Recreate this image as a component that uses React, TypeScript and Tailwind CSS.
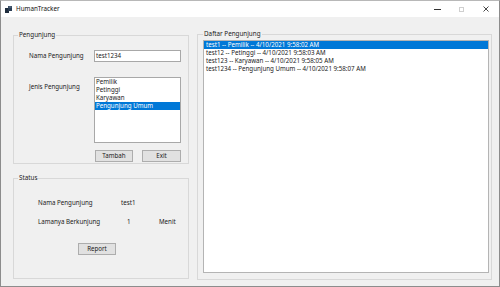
import React from "react";

const font = { fontFamily: '"Noto Sans", "Open Sans", Arial, sans-serif' };

function Btn({ label, w }: { label: string; w: string }) {
  return (
    <div
      className={`${w} h-[12px] bg-[#e1e1e1] border border-[#adadad] flex items-center justify-center text-[6.2px] leading-[8px] text-[#1a1a1a]`}
    >
      {label}
    </div>
  );
}

export default function App() {
  const jenis = ["Pemilik", "Petinggi", "Karyawan", "Pengunjung Umum"];
  const daftar = [
    "test1 -- Pemilik -- 4/10/2021 9:58:02 AM",
    "test12 -- Petinggi -- 4/10/2021 9:58:03 AM",
    "test123 -- Karyawan -- 4/10/2021 9:58:05 AM",
    "test1234 -- Pengunjung Umum -- 4/10/2021 9:58:07 AM",
  ];
  return (
    <div
      className="w-[500px] h-[287px] bg-[#f0f0f0] border border-[#8c8c8c] border-t-[#b8b8b8] flex flex-col overflow-hidden text-[#1a1a1a]"
      style={font}
    >
      {/* Title bar */}
      <div className="h-[16px] bg-white flex items-center shrink-0">
        <svg className="ml-[4px]" width="7" height="7" viewBox="0 0 7 7">
          <rect x="0" y="2" width="4" height="5" fill="#1f2d3d" />
          <rect x="3" y="0" width="4" height="5" fill="#2b3e55" />
          <rect x="3.5" y="0.5" width="3" height="1" fill="#6b7f95" />
        </svg>
        <span className="ml-[4px] text-[6.3px] leading-[8px] text-[#111]">HumanTracker</span>
        <div className="flex-1" />
        <div className="w-[24px] h-[16px] flex items-center justify-center">
          <div className="w-[7px] h-px bg-[#333]" />
        </div>
        <div className="w-[24px] h-[16px] flex items-center justify-center">
          <div className="w-[5px] h-[5px] border border-[#cfcfcf]" />
        </div>
        <div className="w-[26px] h-[16px] flex items-center justify-center">
          <svg width="6" height="6" viewBox="0 0 6 6">
            <path d="M0.5 0.5 L5.5 5.5 M5.5 0.5 L0.5 5.5" stroke="#333" strokeWidth="0.9" />
          </svg>
        </div>
      </div>

      {/* Body */}
      <div className="flex flex-row flex-1 pl-[12px] pt-[13px] gap-[8px]">
        {/* Left column */}
        <div className="w-[176px] flex flex-col mt-px">
          <fieldset className="h-[133px] border border-[#d8d8d8] rounded-none">
            <legend className="ml-[4px] px-px text-[6.3px] leading-[8px]">Pengunjung</legend>
            <div className="flex flex-col pl-[15px] pt-[11px]">
              <div className="flex items-center">
                <div className="w-[65px] text-[6.2px] leading-[8px]">Nama Pengunjung</div>
                <div className="w-[87px] h-[12px] bg-white border border-[#a8a8a8] pl-px flex items-center text-[6.2px] leading-[8px]">
                  test1234
                </div>
              </div>
              <div className="flex items-start mt-[15px]">
                <div className="w-[65px] mt-[6px] text-[6.2px] leading-[8px]">Jenis Pengunjung</div>
                <div className="w-[87px] h-[66px] bg-white border border-[#a8a8a8] flex flex-col">
                  {jenis.map((j, i) => (
                    <div
                      key={j}
                      className={`h-[8px] pl-px text-[6.2px] leading-[8px] ${
                        i === 3 ? "bg-[#0078d7] text-white" : ""
                      }`}
                    >
                      {j}
                    </div>
                  ))}
                </div>
              </div>
              <div className="flex ml-[66px] mt-[7px] gap-[9px]">
                <Btn label="Tambah" w="w-[38px]" />
                <Btn label="Exit" w="w-[39px]" />
              </div>
            </div>
          </fieldset>

          <fieldset className="h-[105px] mt-[10px] border border-[#d8d8d8]">
            <legend className="ml-[4px] px-px text-[6.3px] leading-[8px]">Status</legend>
            <div className="flex flex-col pl-[24px]">
              <div className="flex mt-[17px] text-[6.2px] leading-[8px]">
                <div className="w-[83px]">Nama Pengunjung</div>
                <div>test1</div>
              </div>
              <div className="flex mt-[11px] text-[6.2px] leading-[8px]">
                <div className="w-[83px]">Lamanya Berkunjung</div>
                <div className="w-[38px] pl-[6px]">1</div>
                <div>Menit</div>
              </div>
              <div className="ml-[40px] mt-[17px]">
                <Btn label="Report" w="w-[38px]" />
              </div>
            </div>
          </fieldset>
        </div>

        {/* Right column */}
        <fieldset className="w-[295px] h-[250px] border border-[#d8d8d8]">
          <legend className="ml-[5px] px-px text-[6.3px] leading-[8px]">Daftar Pengunjung</legend>
          <div className="ml-[5px] mt-[2px] w-[286px] h-[233px] bg-white border border-[#b4b4b4] flex flex-col">
            {daftar.map((d, i) => (
              <div
                key={d}
                className={`h-[8px] pl-[2px] text-[6.2px] leading-[8px] ${
                  i === 0 ? "bg-[#0078d7] text-white" : ""
                }`}
              >
                {d}
              </div>
            ))}
          </div>
        </fieldset>
      </div>
    </div>
  );
}
